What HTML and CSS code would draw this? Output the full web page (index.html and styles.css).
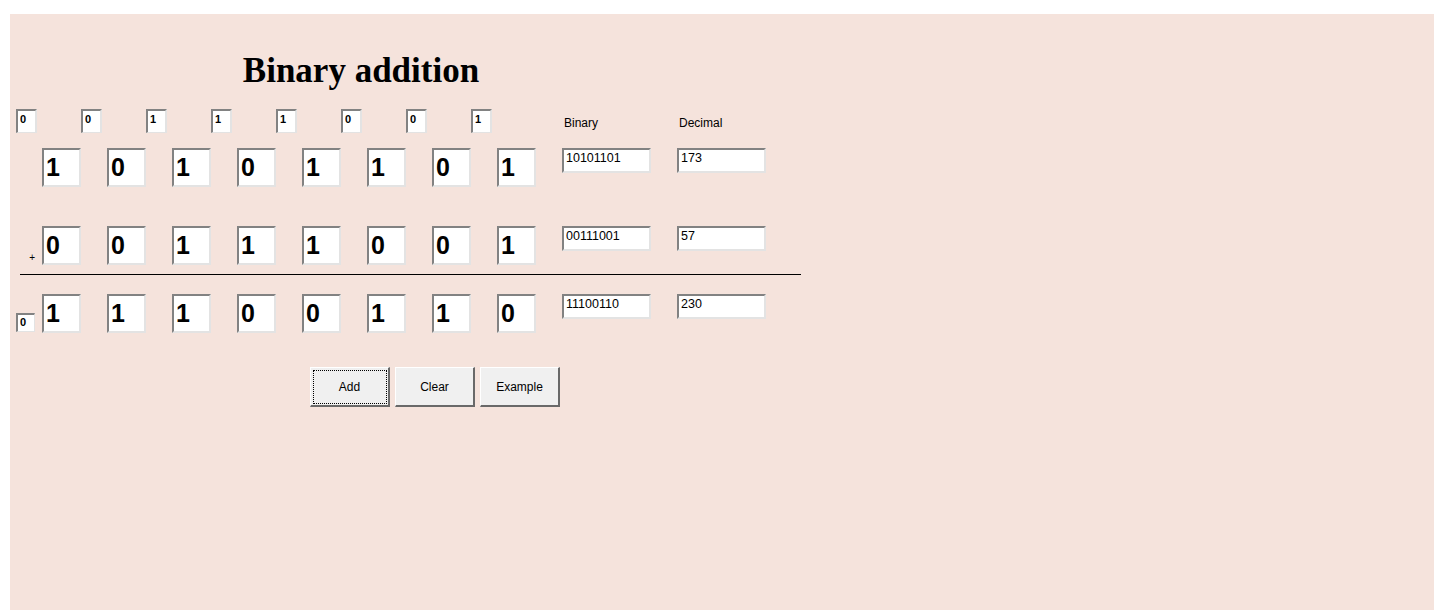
FILE: index.html
```html
<!DOCTYPE html>
<html>
<head>
<meta charset="utf-8">
<title>Binary addition</title>
<link rel="stylesheet" href="styles.css">
</head>
<body>
<div class="panel">
  <h1 class="title">Binary addition</h1>

  <div class="row row-carry">
    <div class="cell"><input class="small" value="0"></div>
    <div class="cell"><input class="small" value="0"></div>
    <div class="cell"><input class="small" value="1"></div>
    <div class="cell"><input class="small" value="1"></div>
    <div class="cell"><input class="small" value="1"></div>
    <div class="cell"><input class="small" value="0"></div>
    <div class="cell"><input class="small" value="0"></div>
    <div class="cell"><input class="small" value="1"></div>
    <div class="spacer"></div>
    <div class="label">Binary</div>
    <div class="label">Decimal</div>
  </div>

  <div class="row row-a">
    <div class="lead"></div>
    <div class="cell"><input class="big" value="1"></div>
    <div class="cell"><input class="big" value="0"></div>
    <div class="cell"><input class="big" value="1"></div>
    <div class="cell"><input class="big" value="0"></div>
    <div class="cell"><input class="big" value="1"></div>
    <div class="cell"><input class="big" value="1"></div>
    <div class="cell"><input class="big" value="0"></div>
    <div class="cell"><input class="big" value="1"></div>
    <input class="num" value="10101101">
    <input class="num" value="173">
  </div>

  <div class="row row-b">
    <div class="lead plus">+</div>
    <div class="cell"><input class="big" value="0"></div>
    <div class="cell"><input class="big" value="0"></div>
    <div class="cell"><input class="big" value="1"></div>
    <div class="cell"><input class="big" value="1"></div>
    <div class="cell"><input class="big" value="1"></div>
    <div class="cell"><input class="big" value="0"></div>
    <div class="cell"><input class="big" value="0"></div>
    <div class="cell"><input class="big" value="1"></div>
    <input class="num" value="00111001">
    <input class="num" value="57">
  </div>

  <div class="rule"></div>

  <div class="row row-sum">
    <div class="lead"><input class="carry" value="0"></div>
    <div class="cell"><input class="big" value="1"></div>
    <div class="cell"><input class="big" value="1"></div>
    <div class="cell"><input class="big" value="1"></div>
    <div class="cell"><input class="big" value="0"></div>
    <div class="cell"><input class="big" value="0"></div>
    <div class="cell"><input class="big" value="1"></div>
    <div class="cell"><input class="big" value="1"></div>
    <div class="cell"><input class="big" value="0"></div>
    <input class="num" value="11100110">
    <input class="num" value="230">
  </div>

  <div class="buttons">
    <button class="btn focused">Add</button>
    <button class="btn">Clear</button>
    <button class="btn">Example</button>
  </div>
</div>
</body>
</html>
```

FILE: styles.css
```css
html, body {
  margin: 0;
  padding: 0;
  background: #ffffff;
}

.panel {
  margin: 14px 15px 0 10px;
  height: 596px;
  background: #f5e3dc;
  padding: 0 0 0 6px;
  box-sizing: border-box;
  overflow: hidden;
  font-family: "Liberation Sans", Arial, sans-serif;
}

.title {
  width: 690px;
  margin: 37px 0 0 0;
  font-family: "Liberation Serif", "Times New Roman", serif;
  font-weight: bold;
  font-size: 35px;
  line-height: 39px;
  text-align: center;
  color: #000;
}

.row {
  display: flex;
  align-items: flex-start;
}

.row-carry {
  margin-top: 19px;
  height: 24px;
  align-items: center;
}

.row-a {
  margin-top: 15px;
}

.row-b {
  margin-top: 39px;
}

.row-sum {
  margin-top: 19px;
}

.cell {
  width: 65px;
  flex: none;
}

.lead {
  width: 26px;
  flex: none;
  height: 39px;
  display: flex;
  align-items: flex-end;
}

.spacer {
  width: 26px;
  flex: none;
}

.label {
  width: 115px;
  flex: none;
  font-size: 12px;
  padding: 3px 0 0 2px;
  box-sizing: border-box;
  color: #000;
}

input {
  margin: 0;
  box-sizing: border-box;
  background: #fff;
  color: #000;
  border-style: solid;
  border-color: #828282 #e3e3e3 #e3e3e3 #828282;
  outline: none;
  font-family: "Liberation Sans", Arial, sans-serif;
}

.small {
  display: block;
  width: 21px;
  height: 24px;
  border-width: 2px 2px 1px 2px;
  padding: 0 0 6px 2px;
  font-size: 11px;
  font-weight: bold;
}

.big {
  display: block;
  width: 39px;
  height: 39px;
  border-width: 2px;
  padding: 0 0 0 2px;
  font-size: 25px;
  font-weight: bold;
}

.num {
  flex: none;
  width: 89px;
  height: 25px;
  border-width: 2px;
  padding: 0 0 6px 2px;
  font-size: 12.5px;
  margin-right: 26px;
}

.plus {
  font-size: 10px;
  justify-content: flex-end;
  padding-right: 7px;
  box-sizing: border-box;
  line-height: 12px;
  padding-bottom: 1px;
}

.carry {
  display: block;
  width: 19px;
  height: 19px;
  border-width: 2px 1px 1px 2px;
  padding: 0 0 2px 2px;
  font-size: 11px;
  font-weight: bold;
  margin-bottom: 1px;
}

.rule {
  width: 781px;
  height: 1px;
  margin: 9px 0 0 4px;
  background: #000;
}

.buttons {
  display: flex;
  gap: 5px;
  margin: 34px 0 0 294px;
}

.btn {
  width: 80px;
  height: 40px;
  box-sizing: border-box;
  background: #f0f0f0;
  border-style: solid;
  border-width: 1px 2px 2px 1px;
  border-color: #ffffff #696969 #696969 #ffffff;
  font-family: "Liberation Sans", Arial, sans-serif;
  font-size: 12px;
  color: #000;
  padding: 0;
  outline: none;
}

.focused {
  outline: 1px dotted #000;
  outline-offset: -4px;
}
```
